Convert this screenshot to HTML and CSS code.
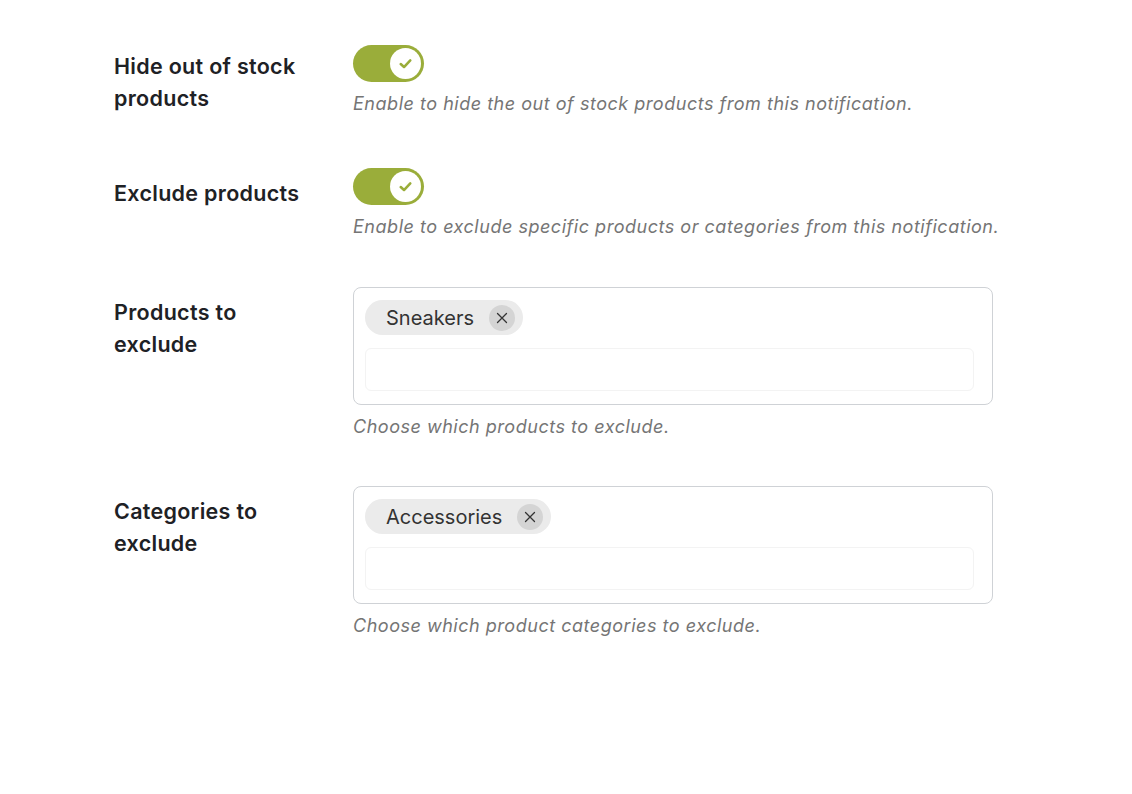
FILE: index.html
```html
<!DOCTYPE html>
<html lang="en">
<head>
<meta charset="utf-8">
<title>Notification settings</title>
<link rel="stylesheet" href="styles.css">
</head>
<body>
<div class="settings">
  <div class="row row-1">
    <div class="label">Hide out of stock products</div>
    <div class="control">
      <span class="toggle">
        <span class="knob">
          <svg viewBox="0 0 16 16" width="17" height="17"><path d="M3.5 8.5 L6.6 11.3 L12.5 5" fill="none" stroke="#9aad3a" stroke-width="2.4" stroke-linecap="round" stroke-linejoin="round"/></svg>
        </span>
      </span>
      <p class="desc">Enable to hide the out of stock products from this notification.</p>
    </div>
  </div>
  <div class="row row-2">
    <div class="label">Exclude products</div>
    <div class="control">
      <span class="toggle">
        <span class="knob">
          <svg viewBox="0 0 16 16" width="17" height="17"><path d="M3.5 8.5 L6.6 11.3 L12.5 5" fill="none" stroke="#9aad3a" stroke-width="2.4" stroke-linecap="round" stroke-linejoin="round"/></svg>
        </span>
      </span>
      <p class="desc">Enable to exclude specific products or categories from this notification.</p>
    </div>
  </div>
  <div class="row row-3">
    <div class="label">Products to exclude</div>
    <div class="control">
      <div class="select">
        <div class="tags">
          <span class="tag">Sneakers<span class="tag-x"><svg viewBox="0 0 12 12" width="12" height="12"><path d="M1.5 1.5 L10.5 10.5 M10.5 1.5 L1.5 10.5" stroke="#333" stroke-width="1.3" stroke-linecap="round"/></svg></span></span>
        </div>
        <div class="search"></div>
      </div>
      <p class="desc">Choose which products to exclude.</p>
    </div>
  </div>
  <div class="row">
    <div class="label">Categories to exclude</div>
    <div class="control">
      <div class="select">
        <div class="tags">
          <span class="tag">Accessories<span class="tag-x"><svg viewBox="0 0 12 12" width="12" height="12"><path d="M1.5 1.5 L10.5 10.5 M10.5 1.5 L1.5 10.5" stroke="#333" stroke-width="1.3" stroke-linecap="round"/></svg></span></span>
        </div>
        <div class="search"></div>
      </div>
      <p class="desc">Choose which product categories to exclude.</p>
    </div>
  </div>
</div>
</body>
</html>
```

FILE: styles.css
```css
* { box-sizing: border-box; }
html, body { margin: 0; padding: 0; background: #ffffff; }
body {
  font-family: Inter, "Noto Sans", "Liberation Sans", sans-serif;
  color: #1e2125;
}
.settings {
  padding: 41px 0 0 114px;
}
.row {
  display: flex;
  align-items: flex-start;
  margin-bottom: 50px;
}
.row-1 { margin-bottom: 52px; }
.row-2 { margin-bottom: 48px; }
.row-3 { margin-bottom: 47px; }
.label {
  width: 239px;
  flex: none;
  padding-right: 36px;
  padding-top: 9px;
  font-size: 21.5px;
  font-weight: 600;
  letter-spacing: 0.3px;
  line-height: 32px;
  color: #1e2125;
}
.row-1 .toggle { margin-top: 4px; }
.control {
  flex: none;
  width: 700px;
}
.toggle {
  display: flex;
  justify-content: flex-end;
  align-items: center;
  width: 71px;
  height: 37px;
  border-radius: 19px;
  background: #9aad3a;
  padding: 0 3px;
}
.knob {
  width: 31px;
  height: 31px;
  border-radius: 50%;
  background: #ffffff;
  display: flex;
  align-items: center;
  justify-content: center;
}
.desc {
  margin: 10px 0 0;
  font-size: 18px;
  letter-spacing: 0.52px;
  line-height: 24px;
  font-style: italic;
  color: #757575;
  white-space: nowrap;
}
.select {
  width: 640px;
  height: 118px;
  border: 1px solid #cfd2d6;
  border-radius: 8px;
  padding: 12px 18px 13px 11px;
  display: flex;
  flex-direction: column;
}
.tags { display: flex; }
.tag {
  display: inline-flex;
  align-items: center;
  height: 35px;
  border-radius: 18px;
  background: #ebebeb;
  padding: 0 8px 0 21px;
  font-size: 20px;
  color: #333333;
}
.tag-x {
  margin-left: 15px;
  width: 26px;
  height: 26px;
  border-radius: 50%;
  background: #d4d4d4;
  display: flex;
  align-items: center;
  justify-content: center;
}
.search {
  margin-top: 13px;
  flex: 1;
  border: 1px solid #f3f3f3;
  border-radius: 6px;
}
```
